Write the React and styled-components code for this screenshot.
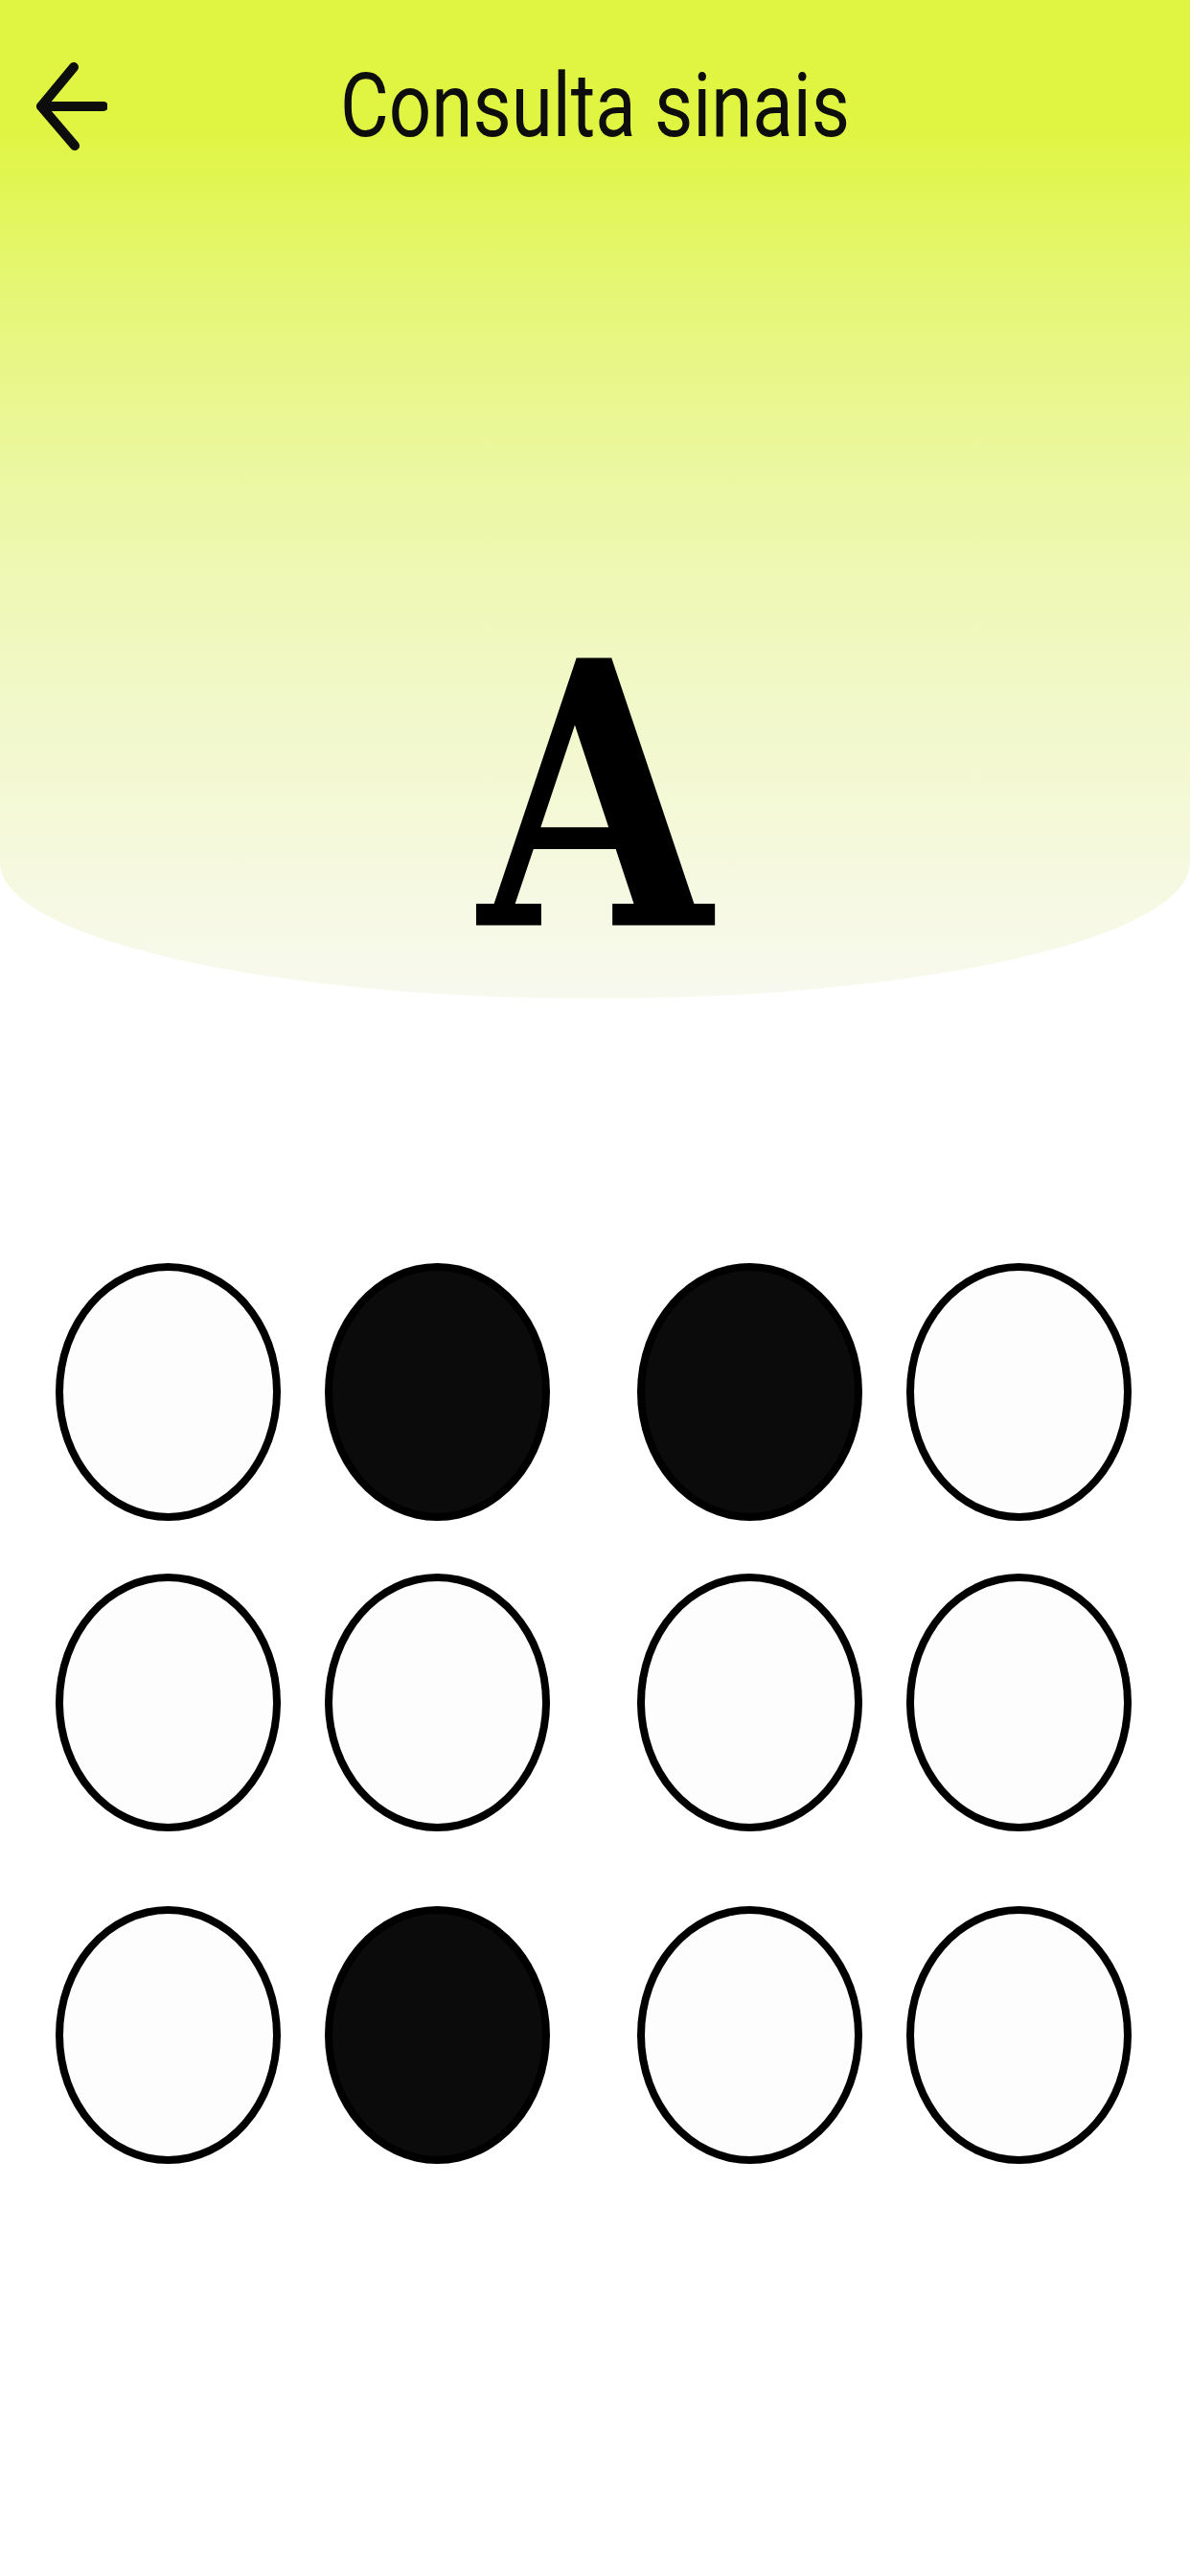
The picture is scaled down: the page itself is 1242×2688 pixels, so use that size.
import React from 'react';
import styled, { createGlobalStyle } from 'styled-components';

const GlobalStyle = createGlobalStyle`
  * {
    box-sizing: border-box;
  }

  body {
    margin: 0;
    background: #ffffff;
    font-family: Roboto, 'Noto Sans', sans-serif;
  }
`;

const Page = styled.div`
  width: 1242px;
  min-height: 2688px;
  background: #ffffff;
  overflow: hidden;
`;

const Hero = styled.header`
  height: 1042px;
  background: linear-gradient(
    180deg,
    #dff542 0%,
    #dff542 13%,
    #e5f672 28%,
    #ebf79e 46%,
    #f1f8c6 68%,
    #f8f9ef 100%
  );
  border-radius: 0 0 50% 50% / 0 0 142px 142px;
`;

const TopBar = styled.div`
  display: grid;
  grid-template-columns: 1fr auto 1fr;
  align-items: start;
  padding-top: 64px;
`;

const BackButton = styled.button`
  justify-self: start;
  margin-left: 38px;
  padding: 0;
  border: none;
  background: none;
  line-height: 0;
  color: #0d0d0d;
  cursor: pointer;
`;

const Title = styled.h1`
  margin: 8px 0 0;
  font-family: Roboto, 'Noto Sans', sans-serif;
  font-weight: 400;
  font-size: 78px;
  line-height: 78px;
  color: #0d0d0d;
  transform: scaleY(1.18);
`;

const LetterWrap = styled.div`
  display: flex;
  justify-content: center;
  margin-top: 508px;
`;

const Letter = styled.div`
  font-family: 'DejaVu Serif', 'Liberation Serif', serif;
  font-weight: 700;
  font-size: 330px;
  line-height: 330px;
  color: #000000;
  transform: scale(0.95, 1.16);
`;

const Board = styled.section`
  display: flex;
  flex-direction: column;
  padding: 276px 62px 0 58px;
`;

const Row = styled.div`
  display: flex;
  gap: 91px;
  margin-top: ${({ $gap }) => $gap}px;
`;

const Pair = styled.div`
  display: flex;
  gap: 46px;
`;

const Dot = styled.div`
  width: 235px;
  height: 269px;
  border-radius: 50%;
  border: 8px solid #000000;
  background: ${({ $filled }) => ($filled ? '#0c0b0b' : '#fdfdfd')};
`;

const rows = [
  { gap: 0, dots: [false, true, true, false] },
  { gap: 55, dots: [false, false, false, false] },
  { gap: 78, dots: [false, true, false, false] },
];

const BackArrow = () => (
  <svg width="74" height="94" viewBox="0 0 74 94" fill="none">
    <path
      d="M39 6 L5 47 L40 88 M5 47 H70"
      stroke="currentColor"
      strokeWidth="10"
      strokeLinecap="round"
      strokeLinejoin="round"
    />
  </svg>
);

const App = () => {
  return (
    <Page>
      <GlobalStyle />
      <Hero>
        <TopBar>
          <BackButton aria-label="Voltar">
            <BackArrow />
          </BackButton>
          <Title>Consulta sinais</Title>
        </TopBar>
        <LetterWrap>
          <Letter>A</Letter>
        </LetterWrap>
      </Hero>
      <Board>
        {rows.map((row, i) => (
          <Row key={i} $gap={row.gap}>
            <Pair>
              <Dot $filled={row.dots[0]} />
              <Dot $filled={row.dots[1]} />
            </Pair>
            <Pair>
              <Dot $filled={row.dots[2]} />
              <Dot $filled={row.dots[3]} />
            </Pair>
          </Row>
        ))}
      </Board>
    </Page>
  );
};

export default App;
